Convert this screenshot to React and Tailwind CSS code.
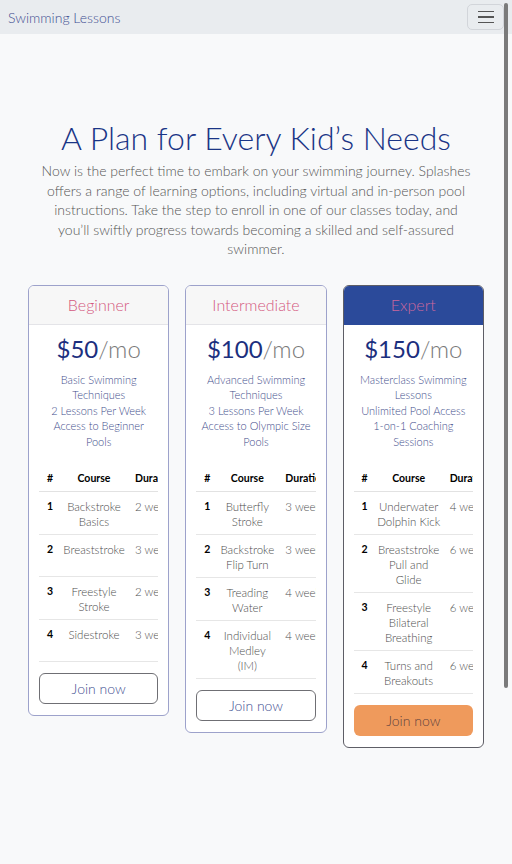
import React from 'react';

const plans = [
    {
        name: 'Beginner',
        price: '$50',
        features: ['Basic Swimming', 'Techniques', '2 Lessons Per Week', 'Access to Beginner', 'Pools'],
        courseW: 'w-[66px]',
        durPad: 'pl-[8px]',
        expert: false,
        rows: [
            { n: 1, course: ['Backstroke', 'Basics'], dur: '2 weeks' },
            { n: 2, course: ['Breaststroke'], dur: '3 weeks' },
            { n: 3, course: ['Freestyle', 'Stroke'], dur: '2 weeks' },
            { n: 4, course: ['Sidestroke'], dur: '3 weeks' },
        ],
    },
    {
        name: 'Intermediate',
        price: '$100',
        features: ['Advanced Swimming', 'Techniques', '3 Lessons Per Week', 'Access to Olympic Size', 'Pools'],
        courseW: 'w-[58px]',
        durPad: 'pl-[9px]',
        expert: false,
        rows: [
            { n: 1, course: ['Butterfly', 'Stroke'], dur: '3 weeks' },
            { n: 2, course: ['Backstroke', 'Flip Turn'], dur: '3 weeks' },
            { n: 3, course: ['Treading', 'Water'], dur: '4 weeks' },
            { n: 4, course: ['Individual', 'Medley', '(IM)'], dur: '4 weeks' },
        ],
    },
    {
        name: 'Expert',
        price: '$150',
        features: ['Masterclass Swimming', 'Lessons', 'Unlimited Pool Access', '1-on-1 Coaching', 'Sessions'],
        courseW: 'w-[66px]',
        durPad: 'pl-[8px]',
        expert: true,
        rows: [
            { n: 1, course: ['Underwater', 'Dolphin Kick'], dur: '4 weeks' },
            { n: 2, course: ['Breaststroke', 'Pull and', 'Glide'], dur: '6 weeks' },
            { n: 3, course: ['Freestyle', 'Bilateral', 'Breathing'], dur: '6 weeks' },
            { n: 4, course: ['Turns and', 'Breakouts'], dur: '6 weeks' },
        ],
    },
];

const PlanCard = ({ plan }) => {
    return (
        <div className={`self-start flex flex-col rounded-[6px] border bg-white overflow-hidden ${plan.expert ? 'border-[#5e5e66]' : 'border-[#9da2cb]'}`}>
            <div className={`h-[39px] flex items-center justify-center border-b text-[16px] font-light ${plan.expert ? 'bg-[#2b4a9a] border-[#2b4a9a] text-[#c9679d]' : 'bg-[#f7f7f7] border-[#e4e4e8] text-[#d4587e]'}`}>
                {plan.name}
            </div>
            <div className="px-[10px] pt-[9px] pb-[11px]">
                <div className="text-center text-[24px] leading-[30px] text-[#1c2f7e]">
                    {plan.price}<span className="text-[#7a7a7a] font-light">/mo</span>
                </div>
                <ul className="mt-[8px] text-center text-[11px] leading-[15.5px] font-light text-[#3f4e8c]">
                    {plan.features.map(f => <li key={f}>{f}</li>)}
                </ul>
                <div className="mt-[15px] overflow-hidden">
                    <table className="table-fixed w-[190px] border-collapse text-[11.5px] leading-[15px]">
                        <thead>
                            <tr className="border-b border-[#e2e2e2]">
                                <th className="w-[22px] pt-[7px] pb-[5px] text-center font-bold text-[10.5px] text-black">#</th>
                                <th className={`${plan.courseW} pt-[7px] pb-[5px] text-center font-bold text-[10.5px] text-black`}>Course</th>
                                <th className={`${plan.durPad} pt-[7px] pb-[5px] text-left font-bold text-[10.5px] text-black whitespace-nowrap`}>Duration</th>
                            </tr>
                        </thead>
                        <tbody>
                            {plan.rows.map(r => (
                                <tr key={r.n} className="h-[42px] border-b border-[#e6e6e6]">
                                    <td className="align-top pt-[7px] pb-[5px] text-center font-bold text-[10.5px] text-black">{r.n}</td>
                                    <td className="align-top pt-[7px] pb-[5px] px-[1px] text-center font-light text-[#4e4e4e]">
                                        {r.course.map((l, i) => <div key={i}>{l}</div>)}
                                    </td>
                                    <td className={`${plan.durPad} align-top pt-[7px] pb-[5px] text-left font-light text-[#4e4e4e] whitespace-nowrap`}>{r.dur}</td>
                                </tr>
                            ))}
                        </tbody>
                    </table>
                </div>
                <button className={`mt-[11px] w-full h-[31px] rounded-[6px] text-[14px] font-light ${plan.expert ? 'bg-[#ef9a5c] text-[#5e4240]' : 'border border-[#6f6f74] text-[#3f4f92]'}`}>
                    Join now
                </button>
            </div>
        </div>
    );
};

export default function App() {
    return (
        <div className="relative min-h-screen bg-[#f8f9fa] font-['Lato','Noto_Sans',sans-serif]">
            <nav className="h-[34px] bg-[#e9ecef] flex items-center justify-between pl-[8px] pr-[8px]">
                <span className="text-[14px] font-light text-[#3f4f92]">Swimming Lessons</span>
                <button className="w-[37px] h-[26px] rounded-[5px] border border-[#d2d5da] flex flex-col items-center justify-center gap-[4px]">
                    <span className="block w-[16px] h-[1.5px] bg-[#555]"></span>
                    <span className="block w-[16px] h-[1.5px] bg-[#555]"></span>
                    <span className="block w-[16px] h-[1.5px] bg-[#555]"></span>
                </button>
            </nav>

            <div className="pt-[86px] px-[28px]">
                <h1 className="text-center text-[32px] leading-[36px] font-light text-[#1a3586]">A Plan for Every Kid’s Needs</h1>
                <p className="mt-[5px] text-center text-[14px] leading-[19.5px] font-light text-[#555]">
                    Now is the perfect time to embark on your swimming journey. Splashes<br />
                    offers a range of learning options, including virtual and in-person pool<br />
                    instructions. Take the step to enroll in one of our classes today, and<br />
                    you’ll swiftly progress towards becoming a skilled and self-assured<br />
                    swimmer.
                </p>

                <div className="mt-[26px] grid grid-cols-3 gap-4 items-start">
                    {plans.map(p => <PlanCard key={p.name} plan={p} />)}
                </div>
            </div>

            <div className="absolute top-[3px] right-[4px] w-[4px] h-[685px] rounded-full bg-[#7b7b7b]"></div>
        </div>
    );
}
